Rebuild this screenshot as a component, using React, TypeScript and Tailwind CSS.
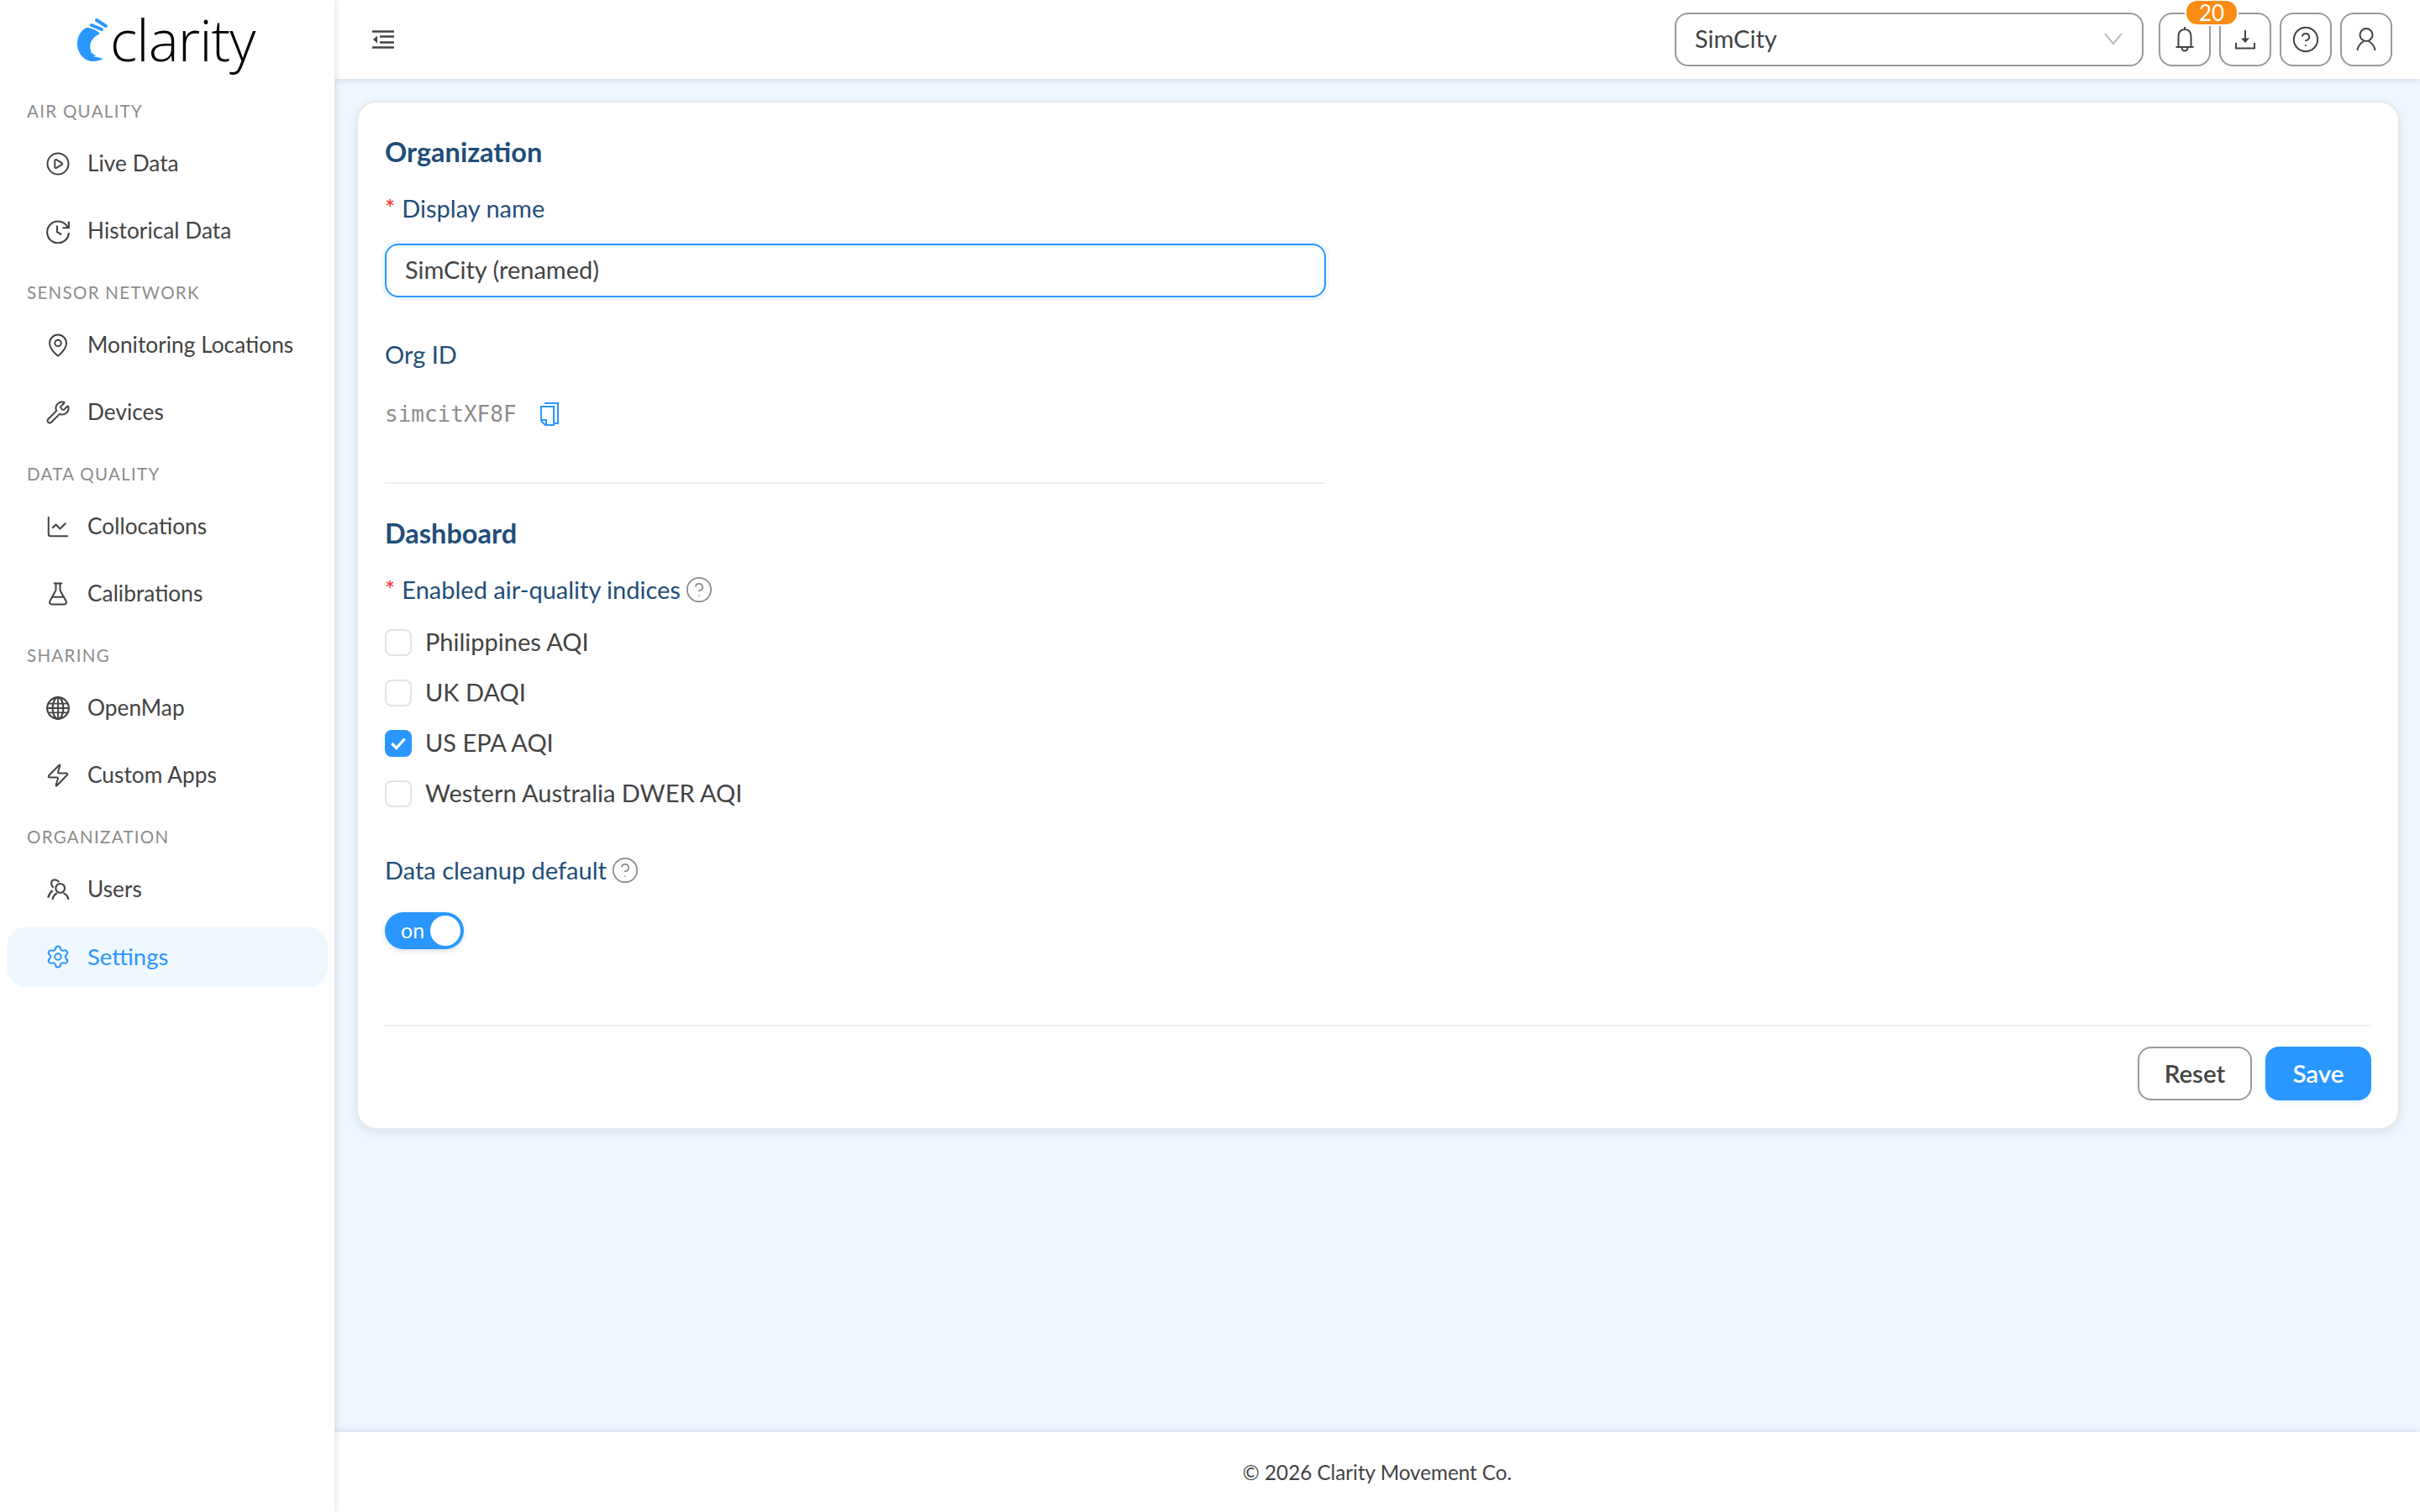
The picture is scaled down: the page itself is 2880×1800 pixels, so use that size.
import {
  ChartLine,
  CircleHelp,
  CirclePlay,
  FlaskConical,
  MapPin,
  Settings,
  Wrench,
  Zap,
} from "lucide-react";
import type { ComponentType } from "react";

type IconProps = { className?: string; strokeWidth?: number };

interface NavItem {
  label: string;
  icon: ComponentType<IconProps>;
  active?: boolean;
}

function ClockBack({ className }: IconProps) {
  return (
    <svg viewBox="0 0 28 28" className={className} fill="none" stroke="currentColor" strokeWidth="2">
      <path d="M25 10.5A12 12 0 1 0 26 16" />
      <path d="M26 3.5V10.5H19" />
      <path d="M13 8V15L18 18" />
    </svg>
  );
}

function GlobeGrid({ className }: IconProps) {
  return (
    <svg viewBox="0 0 28 28" className={className} fill="none" stroke="currentColor" strokeWidth="2">
      <circle cx="14" cy="14" r="12" />
      <ellipse cx="14" cy="14" rx="6" ry="12" />
      <path d="M14 2V26M3 9H25M2 14H26M3 19H25" strokeWidth="1.75" />
    </svg>
  );
}

function TwoUsers({ className }: IconProps) {
  return (
    <svg viewBox="0 0 28 28" className={className} fill="none" stroke="currentColor" strokeWidth="2">
      <circle cx="16.5" cy="12.5" r="5" />
      <path d="M8 25C8.5 21 11 19 13 18M25.5 25C25 21 22.5 19 20 18" />
      <path d="M15 6C14 3 9 2 7 5C6 8 7 10 9 12M3 23C4 19 5.5 17 8 15" />
    </svg>
  );
}

const navSections: { title: string; items: NavItem[] }[] = [
  {
    title: "AIR QUALITY",
    items: [
      { label: "Live Data", icon: CirclePlay },
      { label: "Historical Data", icon: ClockBack },
    ],
  },
  {
    title: "SENSOR NETWORK",
    items: [
      { label: "Monitoring Locations", icon: MapPin },
      { label: "Devices", icon: Wrench },
    ],
  },
  {
    title: "DATA QUALITY",
    items: [
      { label: "Collocations", icon: ChartLine },
      { label: "Calibrations", icon: FlaskConical },
    ],
  },
  {
    title: "SHARING",
    items: [
      { label: "OpenMap", icon: GlobeGrid },
      { label: "Custom Apps", icon: Zap },
    ],
  },
  {
    title: "ORGANIZATION",
    items: [
      { label: "Users", icon: TwoUsers },
      { label: "Settings", icon: Settings, active: true },
    ],
  },
];

const indices = [
  { label: "Philippines AQI", checked: false },
  { label: "UK DAQI", checked: false },
  { label: "US EPA AQI", checked: true },
  { label: "Western Australia DWER AQI", checked: false },
];

function Logo() {
  return (
    <div className="flex h-[107px] items-start pl-[90px] pt-[9px]">
      <svg viewBox="0 0 40 56" className="mt-[11px] h-[56px] w-[40px] shrink-0">
        <path
          d="M29 20C24 15 18 13 13 13C6 16 2 24 2 32C2 44 11 53 20 53C25 53 29 52 33 50C26 48 20 45 18 40C16 34 17 26 29 20Z"
          fill="#2997ff"
        />
        <path d="M25 4L36 11M19 10L31 15" stroke="#2997ff" strokeWidth="4" strokeLinecap="round" fill="none" />
        <path d="M18 42L27 47M22 47L33 49" stroke="#fff" strokeWidth="1" />
      </svg>
      <span className="ml-[1px] font-['Open_Sans'] text-[68px] leading-[76px] font-light tracking-[-1px] text-black">
        clarity
      </span>
    </div>
  );
}

function Sidebar() {
  return (
    <aside className="z-20 flex w-[398px] shrink-0 flex-col bg-white shadow-[2px_0_8px_rgba(0,40,80,0.12)]">
      <Logo />
      {navSections.map((section) => (
        <div key={section.title} className="mb-[12px]">
          <div className="flex h-[52px] items-center pb-[2px] pl-[32px] text-[20.5px] tracking-[1.3px] text-[#8c8c8c]">
            {section.title}
          </div>
          <div className="flex flex-col gap-[8px]">
            {section.items.map((item) => {
              const Icon = item.icon;
              return (
                <div
                  key={item.label}
                  className={
                    item.active
                      ? "mx-[8px] flex h-[72px] w-[382px] items-center rounded-[24px] bg-[#f0f8ff] pl-[46px] text-[27.5px] text-[#2997ff]"
                      : "mx-[8px] flex h-[72px] w-[382px] items-center pl-[46px] text-[26.3px] text-[#434343]"
                  }
                >
                  <Icon className="h-[30px] w-[30px]" strokeWidth={1.6} />
                  <span className="ml-[20px]">{item.label}</span>
                </div>
              );
            })}
          </div>
        </div>
      ))}
    </aside>
  );
}

function IconButton({ children }: { children: React.ReactNode }) {
  return (
    <button
      type="button"
      className="flex h-[64px] w-[62px] items-center justify-center rounded-[16px] border-2 border-[#9a9a9a] bg-white text-[#434343] shadow-[0_4px_4px_rgba(0,0,0,0.02)]"
    >
      {children}
    </button>
  );
}

function Topbar() {
  return (
    <header className="z-10 flex h-[94px] shrink-0 items-center justify-between bg-white pl-[45px] pr-[33px] shadow-[0_2px_8px_rgba(0,40,80,0.12)]">
      <svg viewBox="0 0 26 22" className="h-[22px] w-[26px] text-[#434343]" fill="none" stroke="currentColor" strokeWidth="2.5">
        <path d="M0 1.5H26M9 7.5H26M9 14.5H26M0 20.5H26" />
        <path d="M1 11L6 6.5V15.5Z" fill="currentColor" stroke="none" />
      </svg>
      <div className="flex items-center gap-[10px]">
        <div className="mr-[8px] flex h-[64px] w-[558px] items-center justify-between rounded-[16px] border-2 border-[#9a9a9a] bg-white pb-[2px] pl-[22px] pr-[23px] text-[29px] text-[#434343]">
          <span>SimCity</span>
          <svg viewBox="0 0 22 14" className="h-[14px] w-[22px] text-[#b0b0b0]" fill="none" stroke="currentColor" strokeWidth="1.75">
            <path d="M1 1L11 13L21 1" />
          </svg>
        </div>
        <div className="relative">
          <IconButton>
            <svg viewBox="0 0 24 32" className="h-[32px] w-[24px]" fill="none" stroke="currentColor" strokeWidth="2">
              <path d="M1.5 25H22.5M4.5 25V13Q4.5 4 12 4Q19.5 4 19.5 13V25M12 1V4" />
              <path d="M8.5 26A3.5 3.5 0 0 0 15.5 26" />
            </svg>
          </IconButton>
          <span className="absolute left-[33px] top-[-14px] z-10 flex h-[28px] w-[60px] items-center justify-center rounded-[13px] bg-[#fa8c16] text-[26px] text-white shadow-[0_0_0_2px_#fff]">
            20
          </span>
        </div>
        <IconButton>
          <svg viewBox="0 0 24 24" className="h-[24px] w-[24px]" fill="none" stroke="currentColor" strokeWidth="2">
            <path d="M12 1V12M1 16V22.5H23V16" />
            <path d="M7 10.5H17L12 16Z" fill="currentColor" stroke="none" />
          </svg>
        </IconButton>
        <IconButton>
          <CircleHelp className="h-[34px] w-[34px]" strokeWidth={1.4} />
        </IconButton>
        <IconButton>
          <svg viewBox="0 0 24 28" className="h-[28px] w-[24px]" fill="none" stroke="currentColor" strokeWidth="2">
            <circle cx="12" cy="8.5" r="7.5" />
            <path d="M1.5 27C2 21 6 18 9 16M22.5 27C22 21 18 18 15 16" />
          </svg>
        </IconButton>
      </div>
    </header>
  );
}

function RequiredMark() {
  return <span className="mr-[8px] text-[#ff2b2b]">*</span>;
}

function HelpMark() {
  return <CircleHelp className="ml-[5px] h-[34px] w-[34px] text-[#8c8c8c]" strokeWidth={1.25} />;
}

function SettingsCard() {
  return (
    <section className="rounded-[24px] border-2 border-[#e6e9ec] bg-white pb-[33px] pl-[30px] pr-[32px] pt-[39px] shadow-[0_4px_12px_rgba(0,40,80,0.1)]">
      <div className="pl-[2px]">
        <h2 className="h-[40px] text-[32.5px] leading-[40px] font-bold text-[#1f4e79]">Organization</h2>
        <label className="mt-[29px] flex h-[36px] items-center text-[29px] text-[#1f4e79]">
          <RequiredMark />
          Display name
        </label>
        <div className="mt-[24px] flex h-[64px] w-[1120px] items-center rounded-[16px] border-2 border-[#2997ff] pb-[2px] pl-[22px] text-[29px] text-[#434343] shadow-[0_0_0_4px_#f0f8ff]">
          SimCity (renamed)
        </div>
        <div className="mt-[50px] flex h-[36px] items-center text-[29px] text-[#1f4e79]">Org ID</div>
        <div className="mt-[35px] flex h-[36px] items-center">
          <span className="font-['DejaVu_Sans_Mono'] text-[26px] text-[#8c8c8c]">simcitXF8F</span>
          <svg viewBox="0 0 22 28" className="ml-[28px] h-[28px] w-[22px] text-[#2997ff]" fill="none" stroke="currentColor" strokeWidth="2">
            <path d="M5 1H21V25H17" />
            <path d="M1 5H16V27H6L1 22Z" />
            <path d="M1 21H7V27" />
          </svg>
        </div>
        <div className="mt-[63px] h-[2px] w-[1120px] bg-[#f0f0f0]" />
        <h2 className="mt-[39px] h-[40px] text-[32.5px] leading-[40px] font-bold text-[#1f4e79]">Dashboard</h2>
        <label className="mt-[29px] flex h-[36px] items-center text-[29px] text-[#1f4e79]">
          <RequiredMark />
          Enabled air-quality indices
          <HelpMark />
        </label>
        <div className="mt-[15px] flex flex-col">
          {indices.map((item) => (
            <div key={item.label} className="flex h-[60px] items-center text-[29px] text-[#434343]">
              {item.checked ? (
                <span className="flex h-[32px] w-[32px] items-center justify-center rounded-[8px] bg-[#2997ff]">
                  <svg viewBox="0 0 20 20" className="h-[22px] w-[22px]" fill="none" stroke="#fff" strokeWidth="3">
                    <path d="M3 10L8 15L17 5" />
                  </svg>
                </span>
              ) : (
                <span className="h-[32px] w-[32px] rounded-[8px] border-2 border-[#e3e3e3] bg-white" />
              )}
              <span className="ml-[16px] pb-[2px]">{item.label}</span>
            </div>
          ))}
        </div>
        <div className="mt-[43px] flex h-[36px] items-center text-[29px] text-[#1f4e79]">
          Data cleanup default
          <HelpMark />
        </div>
        <div className="mt-[32px] flex h-[44px] w-[94px] items-center justify-between rounded-full bg-[#2997ff] pl-[19px] pr-[4px] shadow-[0_2px_6px_rgba(0,40,80,0.15)]">
          <span className="text-[25px] text-white">on</span>
          <span className="h-[36px] w-[36px] rounded-full bg-white" />
        </div>
        <div className="mt-[90px] h-[2px] bg-[#f0f0f0]" />
        <div className="mt-[24px] flex justify-end gap-[16px]">
          <button
            type="button"
            className="h-[64px] w-[136px] rounded-[16px] border-2 border-[#9a9a9a] bg-white text-[29.5px] font-semibold text-[#434343] shadow-[0_4px_4px_rgba(0,0,0,0.02)]"
          >
            Reset
          </button>
          <button
            type="button"
            className="h-[64px] w-[126px] rounded-[16px] bg-[#2997ff] text-[29.5px] font-semibold text-white shadow-[0_4px_4px_rgba(41,151,255,0.08)]"
          >
            Save
          </button>
        </div>
      </div>
    </section>
  );
}

export default function App() {
  return (
    <div className="flex h-screen w-full overflow-hidden bg-[#f0f8ff] font-['Lato',sans-serif]">
      <Sidebar />
      <div className="flex min-w-0 flex-1 flex-col">
        <Topbar />
        <main className="flex-1 pl-[26px] pr-[24px] pt-[26px]">
          <SettingsCard />
        </main>
        <footer className="z-10 flex h-[95px] shrink-0 items-center justify-center bg-white pt-[2px] text-[24.2px] text-[#434343] shadow-[0_-2px_8px_rgba(0,40,80,0.12)]">
          © 2026 Clarity Movement Co.
        </footer>
      </div>
    </div>
  );
}
